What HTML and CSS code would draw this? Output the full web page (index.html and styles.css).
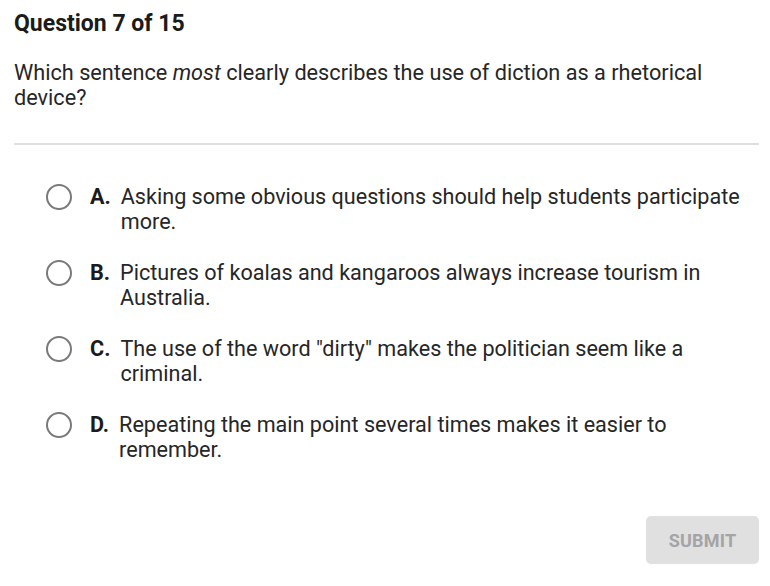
FILE: index.html
```html
<!DOCTYPE html>
<html lang="en">
<head>
<meta charset="utf-8">
<title>Question 7 of 15</title>
<link rel="stylesheet" href="styles.css">
</head>
<body>
<main class="quiz">
  <h1 class="title">Question 7 of 15</h1>
  <p class="question">Which sentence <em>most</em> clearly describes the use of diction as a rhetorical device?</p>
  <hr class="divider">
  <ul class="options">
    <li class="option"><span class="radio"></span><span class="letter">A.</span><span class="text">Asking some obvious questions should help students participate more.</span></li>
    <li class="option"><span class="radio"></span><span class="letter">B.</span><span class="text">Pictures of koalas and kangaroos always increase tourism in Australia.</span></li>
    <li class="option"><span class="radio"></span><span class="letter">C.</span><span class="text">The use of the word "dirty" makes the politician seem like a criminal.</span></li>
    <li class="option"><span class="radio"></span><span class="letter">D.</span><span class="text">Repeating the main point several times makes it easier to remember.</span></li>
  </ul>
  <div class="actions">
    <button class="submit" type="button">SUBMIT</button>
  </div>
</main>
</body>
</html>
```

FILE: styles.css
```css
html, body {
  margin: 0;
  padding: 0;
  background: #ffffff;
}

body {
  font-family: Roboto, "Liberation Sans", Arial, sans-serif;
  color: #222222;
}

.quiz {
  padding: 12px 11px 0 14px;
}

.title {
  margin: 0;
  font-size: 23px;
  line-height: 24px;
  font-weight: 700;
  color: #1b1b1b;
  letter-spacing: 0;
}

.question {
  margin: 24px 0 0;
  font-size: 21.7px;
  line-height: 25px;
  font-weight: 400;
  color: #262626;
}

.question em {
  font-style: italic;
}

.divider {
  margin: 33px 0 0;
  border: 0;
  height: 2px;
  background: #e0e0e0;
}

.options {
  list-style: none;
  margin: 39px 0 0;
  padding: 0 0 0 33px;
  display: flex;
  flex-direction: column;
  gap: 26px;
}

.option {
  display: flex;
  align-items: flex-start;
  font-size: 21.6px;
  line-height: 25px;
  color: #262626;
}

.radio {
  flex: none;
  box-sizing: border-box;
  width: 26px;
  height: 26px;
  border: 2px solid #7a7a7a;
  border-radius: 50%;
  margin-left: -1px;
  margin-right: 18px;
}

.letter {
  flex: none;
  font-weight: 700;
  color: #1b1b1b;
  margin-right: 10px;
}

.text {
  flex: 1;
}

.actions {
  display: flex;
  justify-content: flex-end;
  margin-top: 54px;
}

.submit {
  width: 113px;
  height: 48px;
  border: 0;
  border-radius: 5px;
  background: #e0e0e0;
  color: #a4a4a4;
  font-family: Roboto, "Liberation Sans", Arial, sans-serif;
  font-size: 18px;
  font-weight: 700;
  letter-spacing: 0.2px;
  padding: 0;
}
```
